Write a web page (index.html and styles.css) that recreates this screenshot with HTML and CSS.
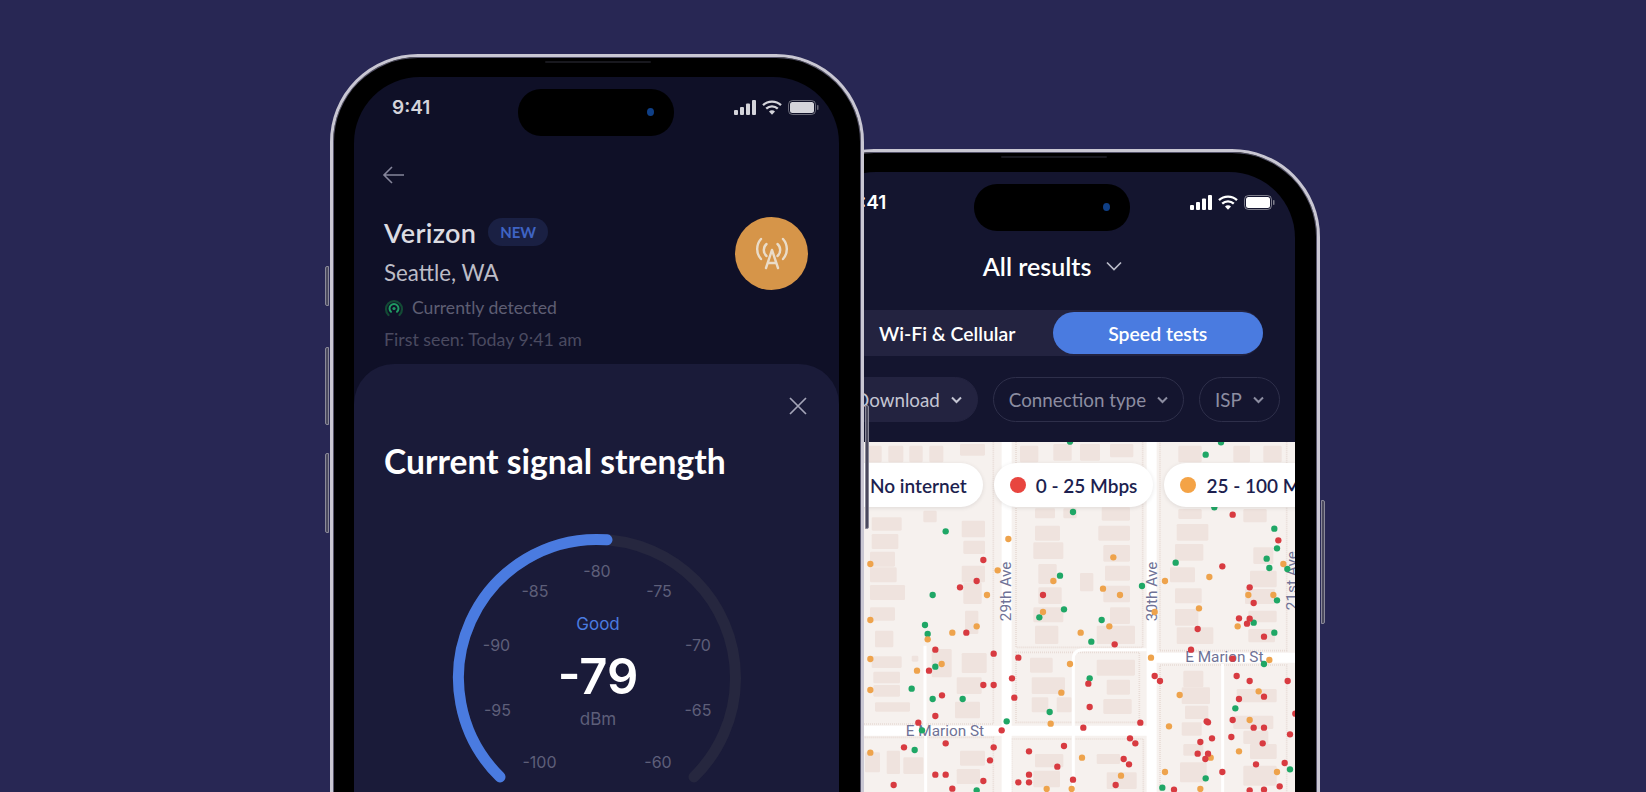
FILE: index.html
```html
<!DOCTYPE html>
<html lang="en">
<head>
    <meta charset="UTF-8">
    <meta name="viewport" content="width=device-width, initial-scale=1.0">
    <title>Signal strength and speed test map</title>
    <link rel="stylesheet" href="styles.css">
</head>
<body>
    <div class="stage">
        <!-- signal strength phone, sits on top -->
        <div class="phone phone-front">
            <span class="side-btn mute"></span>
            <span class="side-btn vol-up"></span>
            <span class="side-btn vol-down"></span>
            <span class="side-btn power"></span>
            <span class="speaker"></span>
            <div class="screen screen-dim">
                <div class="island"><span class="lens"></span></div>
                <div class="status">
                    <span class="time">9:41</span>
                    <div class="status-icons">
                        <svg width="22" height="15" viewBox="0 0 22 15"><g fill="currentColor"><rect x="0" y="10" width="4" height="5" rx="1"/><rect x="6" y="7" width="4" height="8" rx="1"/><rect x="12" y="3.500" width="4" height="11.500" rx="1"/><rect x="18" y="0" width="4" height="15" rx="1"/></g></svg>
                        <svg width="20" height="15" viewBox="0 0 20 15"><g fill="none" stroke="currentColor" stroke-width="2.300"><path d="M1 5.200a13 13 0 0 1 18 0"/><path d="M4.200 8.600a8.500 8.500 0 0 1 11.600 0"/></g><path d="M7 11.400a4.200 4.200 0 0 1 6 0L10 14.800z" fill="currentColor"/></svg>
                        <svg width="31" height="15" viewBox="0 0 31 15"><rect x="0.500" y="0.500" width="27" height="14" rx="4" fill="none" stroke="currentColor" stroke-opacity="0.450"/><rect x="2" y="2" width="24" height="11" rx="2.500" fill="currentColor"/><rect x="29" y="5" width="1.500" height="5" rx="0.750" fill="currentColor" fill-opacity="0.450"/></svg>
                    </div>
                </div>
                <div class="details">
                    <svg class="back" width="24" height="24" viewBox="0 0 24 24" fill="none" stroke="#85859a" stroke-width="1.600"><path d="M23 12H3M11 4l-8 8 8 8"/></svg>
                    <div class="carrier">
                        <div class="carrier-info">
                            <div class="carrier-name">
                                <span class="name">Verizon</span>
                                <span class="badge">NEW</span>
                            </div>
                            <div class="city">Seattle, WA</div>
                            <div class="detected">
                                <svg width="20" height="20" viewBox="0 0 20 20" fill="none" stroke-linecap="round"><path d="M4.500 17a8 8 0 1 1 11 0" stroke="#134a35" stroke-width="2.200"/><path d="M7 13.800a4.500 4.500 0 1 1 6 0" stroke="#1f9a62" stroke-width="2"/><circle cx="10" cy="10.500" r="1.600" fill="#1f9a62"/></svg>
                                <span>Currently detected</span>
                            </div>
                            <div class="first-seen">First seen: Today 9:41 am</div>
                        </div>
                        <div class="tower">
                            <svg width="38" height="38" viewBox="0 0 38 38" fill="none" stroke="#eadcc8" stroke-width="2.400" stroke-linecap="round"><path d="M19 15L13 33M19 15l6 18M15 28h8"/><path d="M13.500 9a8 8 0 0 0 0 12M24.500 9a8 8 0 0 1 0 12"/><path d="M8 4a15 15 0 0 0 0 20M30 4a15 15 0 0 1 0 20"/></svg>
                        </div>
                    </div>
                </div>
                <div class="sheet">
                    <div class="sheet-top">
                        <svg width="18" height="18" viewBox="0 0 18 18" stroke="#a4a5b8" stroke-width="1.700"><path d="M1 1l16 16M17 1L1 17"/></svg>
                    </div>
                    <h1 class="sheet-title">Current signal strength</h1>
                    <svg class="gauge" width="320" height="260" viewBox="0 0 320 260" fill="none">
                        <path d="M63 248.900A138.500 138.500 0 1 1 257 248.900" stroke="#26273f" stroke-width="11" stroke-linecap="round"/>
                        <path d="M63 248.900A138.500 138.500 0 0 1 170 11.860" stroke="#4a7be0" stroke-width="11" stroke-linecap="round"/>
                        <text class="tick" x="160" y="43">-80</text>
                        <text class="tick" x="98" y="63">-85</text>
                        <text class="tick" x="222" y="63">-75</text>
                        <text class="tick" x="59.500" y="116.500">-90</text>
                        <text class="tick" x="261" y="116.500">-70</text>
                        <text class="tick" x="60.500" y="181.600">-95</text>
                        <text class="tick" x="261" y="181.600">-65</text>
                        <text class="tick" x="102.500" y="234">-100</text>
                        <text class="tick" x="221" y="234">-60</text>
                        <text class="quality" x="161" y="96">Good</text>
                        <text class="reading" x="161" y="148">-79</text>
                        <text class="unit" x="161" y="191">dBm</text>
                    </svg>
                </div>
            </div>
        </div>

        <!-- speed test map phone -->
        <div class="phone phone-back">
            <span class="side-btn power"></span>
            <span class="speaker"></span>
            <div class="screen">
                <div class="island"><span class="lens"></span></div>
                <div class="status status-bright">
                    <span class="time">9:41</span>
                    <div class="status-icons">
                        <svg width="22" height="15" viewBox="0 0 22 15"><g fill="currentColor"><rect x="0" y="10" width="4" height="5" rx="1"/><rect x="6" y="7" width="4" height="8" rx="1"/><rect x="12" y="3.500" width="4" height="11.500" rx="1"/><rect x="18" y="0" width="4" height="15" rx="1"/></g></svg>
                        <svg width="20" height="15" viewBox="0 0 20 15"><g fill="none" stroke="currentColor" stroke-width="2.300"><path d="M1 5.200a13 13 0 0 1 18 0"/><path d="M4.200 8.600a8.500 8.500 0 0 1 11.600 0"/></g><path d="M7 11.400a4.200 4.200 0 0 1 6 0L10 14.800z" fill="currentColor"/></svg>
                        <svg width="31" height="15" viewBox="0 0 31 15"><rect x="0.500" y="0.500" width="27" height="14" rx="4" fill="none" stroke="currentColor" stroke-opacity="0.450"/><rect x="2" y="2" width="24" height="11" rx="2.500" fill="currentColor"/><rect x="29" y="5" width="1.500" height="5" rx="0.750" fill="currentColor" fill-opacity="0.450"/></svg>
                    </div>
                </div>
                <div class="results-title">
                    <span>All results</span>
                    <svg width="16" height="10" viewBox="0 0 16 10" fill="none" stroke="#b9bac8" stroke-width="1.700"><path d="M1 1.500l7 7 7-7"/></svg>
                </div>
                <div class="segment">
                    <div class="seg-item">Wi-Fi &amp; Cellular</div>
                    <div class="seg-item seg-active">Speed tests</div>
                </div>
                <div class="filters">
                    <div class="filter filter-on">Download <svg width="11" height="8" viewBox="0 0 11 8" fill="none" stroke="currentColor" stroke-width="2"><path d="M1 1.500l4.500 4.500 4.500-4.500"/></svg></div>
                    <div class="filter">Connection type <svg width="11" height="8" viewBox="0 0 11 8" fill="none" stroke="currentColor" stroke-width="2"><path d="M1 1.500l4.500 4.500 4.500-4.500"/></svg></div>
                    <div class="filter">ISP <svg width="11" height="8" viewBox="0 0 11 8" fill="none" stroke="currentColor" stroke-width="2"><path d="M1 1.500l4.500 4.500 4.500-4.500"/></svg></div>
                </div>
                <div class="map">
                    <svg class="map-art" width="486" height="352" viewBox="-150 39 1458 1056">
                        <g class="blocks">
                            <rect x="-160" y="30" width="560" height="855"/>
                            <rect x="468" y="30" width="380" height="625"/>
                            <rect x="468" y="670" width="370" height="210"/>
                            <rect x="900" y="30" width="380" height="635"/>
                            <rect x="900" y="708" width="380" height="400"/>
                            <rect x="455" y="930" width="395" height="170"/>
                            <rect x="-160" y="925" width="560" height="170"/>
                        </g>
                        <g class="bldg">
                            <rect x="300" y="45" width="75" height="35"/><rect x="25" y="50" width="40" height="50"/><rect x="85" y="50" width="45" height="50"/><rect x="148" y="50" width="40" height="50"/><rect x="208" y="50" width="42" height="50"/>
                            <rect x="35" y="265" width="90" height="40"/><rect x="35" y="315" width="80" height="45"/><rect x="190" y="245" width="40" height="35"/><rect x="305" y="275" width="70" height="50"/><rect x="310" y="335" width="65" height="40"/>
                            <rect x="30" y="368" width="75" height="45"/><rect x="30" y="415" width="80" height="45"/><rect x="30" y="468" width="105" height="45"/><rect x="305" y="410" width="70" height="50"/><rect x="310" y="460" width="55" height="65"/>
                            <rect x="30" y="535" width="75" height="40"/><rect x="45" y="605" width="55" height="50"/><rect x="315" y="545" width="40" height="70"/>
                            <rect x="35" y="682" width="90" height="35"/><rect x="155" y="680" width="20" height="18"/><rect x="215" y="660" width="60" height="85"/><rect x="305" y="672" width="75" height="60"/>
                            <rect x="40" y="728" width="80" height="35"/><rect x="40" y="768" width="80" height="35"/><rect x="290" y="745" width="75" height="50"/><rect x="45" y="820" width="105" height="28"/><rect x="285" y="818" width="75" height="50"/>
                            <rect x="480" y="50" width="55" height="50"/><rect x="580" y="45" width="55" height="50"/><rect x="660" y="45" width="60" height="50"/><rect x="750" y="45" width="70" height="40"/>
                            <rect x="525" y="238" width="60" height="30"/><rect x="610" y="238" width="40" height="30"/><rect x="725" y="235" width="85" height="40"/>
                            <rect x="525" y="290" width="75" height="45"/><rect x="520" y="340" width="90" height="50"/><rect x="730" y="348" width="80" height="50"/><rect x="715" y="290" width="95" height="45"/><rect x="535" y="405" width="55" height="60"/>
                            <rect x="735" y="410" width="75" height="45"/><rect x="660" y="432" width="40" height="55"/><rect x="535" y="475" width="70" height="50"/><rect x="730" y="470" width="80" height="50"/><rect x="520" y="535" width="90" height="45"/><rect x="750" y="535" width="60" height="50"/>
                            <rect x="525" y="590" width="70" height="55"/><rect x="710" y="590" width="115" height="55"/>
                            <rect x="510" y="686" width="68" height="45"/><rect x="515" y="745" width="100" height="50"/><rect x="515" y="805" width="50" height="45"/><rect x="590" y="805" width="45" height="45"/>
                            <rect x="710" y="692" width="115" height="48"/><rect x="740" y="752" width="70" height="45"/><rect x="730" y="810" width="85" height="45"/>
                            <rect x="955" y="50" width="70" height="50"/><rect x="1120" y="50" width="50" height="50"/><rect x="1210" y="50" width="55" height="50"/><rect x="955" y="240" width="70" height="30"/><rect x="1150" y="240" width="70" height="40"/>
                            <rect x="950" y="285" width="95" height="50"/><rect x="945" y="345" width="85" height="50"/><rect x="1180" y="355" width="60" height="50"/><rect x="930" y="415" width="75" height="45"/><rect x="1170" y="425" width="80" height="50"/>
                            <rect x="945" y="478" width="80" height="45"/><rect x="1155" y="480" width="90" height="45"/><rect x="945" y="540" width="70" height="50"/><rect x="1165" y="545" width="85" height="35"/><rect x="950" y="595" width="110" height="50"/><rect x="1165" y="600" width="80" height="40"/>
                            <rect x="970" y="725" width="60" height="50"/><rect x="965" y="775" width="85" height="50"/><rect x="975" y="830" width="70" height="40"/><rect x="965" y="880" width="60" height="40"/>
                            <rect x="1120" y="860" width="120" height="40"/><rect x="1150" y="905" width="75" height="40"/><rect x="1170" y="945" width="80" height="45"/><rect x="1130" y="780" width="120" height="40"/>
                            <rect x="525" y="975" width="85" height="40"/><rect x="520" y="1025" width="80" height="50"/><rect x="710" y="975" width="70" height="30"/><rect x="740" y="1030" width="90" height="50"/>
                            <rect x="15" y="970" width="45" height="60"/><rect x="80" y="965" width="40" height="70"/><rect x="130" y="985" width="60" height="50"/><rect x="300" y="965" width="75" height="45"/><rect x="290" y="1020" width="70" height="45"/>
                            <rect x="970" y="945" width="60" height="35"/><rect x="960" y="1000" width="80" height="60"/><rect x="1150" y="1010" width="100" height="60"/>
                        </g>
                        <g class="roads">
                            <path d="M440 30V1100M875 30V1100"/>
                            <path d="M-160 905H875M875 686H1320"/>
                        </g>
                        <g class="lanes">
                            <path d="M195 650V890M197 905V1100M1088 705V1100"/>
                            <path d="M640 1100V690Q640 662 670 662H860"/>
                        </g>
                        <text class="street" transform="rotate(-90 437 487)" x="437" y="487">29th Ave</text>
                        <text class="street" transform="rotate(-90 877 487)" x="877" y="487">30th Ave</text>
                        <text class="street" transform="rotate(-90 1297 455)" x="1297" y="455">21st Ave</text>
                        <text class="street" x="255" y="905">E Marion St</text>
                        <text class="street" x="1093" y="685">E Marion St</text>
                        <g class="dot-green">
                            <circle cx="1037" cy="77" r="9.500"/><circle cx="1083" cy="40" r="9.500"/><circle cx="630" cy="38" r="9.500"/><circle cx="639" cy="249" r="9.500"/><circle cx="1063" cy="235" r="9.500"/><circle cx="257" cy="307" r="9.500"/><circle cx="1243" cy="299" r="9.500"/><circle cx="1251" cy="358" r="9.500"/><circle cx="1220" cy="389" r="9.500"/><circle cx="1228" cy="417" r="9.500"/><circle cx="1282" cy="420" r="9.500"/><circle cx="947" cy="401" r="9.500"/><circle cx="600" cy="440" r="9.500"/><circle cx="846" cy="471" r="9.500"/><circle cx="218" cy="498" r="9.500"/><circle cx="1251" cy="514" r="9.500"/><circle cx="612" cy="541" r="9.500"/><circle cx="538" cy="565" r="9.500"/><circle cx="725" cy="573" r="9.500"/><circle cx="195" cy="588" r="9.500"/><circle cx="203" cy="615" r="9.500"/><circle cx="1181" cy="581" r="9.500"/><circle cx="1243" cy="611" r="9.500"/><circle cx="694" cy="638" r="9.500"/><circle cx="226" cy="713" r="9.500"/><circle cx="1212" cy="705" r="9.500"/><circle cx="689" cy="748" r="9.500"/><circle cx="155" cy="779" r="9.500"/><circle cx="218" cy="810" r="9.500"/><circle cx="308" cy="810" r="9.500"/><circle cx="1126" cy="838" r="9.500"/><circle cx="569" cy="849" r="9.500"/><circle cx="440" cy="877" r="9.500"/><circle cx="186" cy="904" r="9.500"/><circle cx="164" cy="963" r="9.500"/><circle cx="1037" cy="1048" r="9.500"/><circle cx="1290" cy="1021" r="9.500"/><circle cx="907" cy="1076" r="9.500"/><circle cx="350" cy="1084" r="9.500"/>
                        </g>
                        <g class="dot-orange">
                            <circle cx="445" cy="330" r="9.500"/><circle cx="760" cy="385" r="9.500"/><circle cx="31" cy="405" r="9.500"/><circle cx="1270" cy="405" r="9.500"/><circle cx="413" cy="424" r="9.500"/><circle cx="1048" cy="444" r="9.500"/><circle cx="580" cy="456" r="9.500"/><circle cx="915" cy="456" r="9.500"/><circle cx="381" cy="498" r="9.500"/><circle cx="729" cy="479" r="9.500"/><circle cx="780" cy="498" r="9.500"/><circle cx="1165" cy="498" r="9.500"/><circle cx="1240" cy="498" r="9.500"/><circle cx="1017" cy="538" r="9.500"/><circle cx="549" cy="549" r="9.500"/><circle cx="884" cy="549" r="9.500"/><circle cx="31" cy="573" r="9.500"/><circle cx="350" cy="592" r="9.500"/><circle cx="748" cy="592" r="9.500"/><circle cx="277" cy="611" r="9.500"/><circle cx="662" cy="611" r="9.500"/><circle cx="1133" cy="592" r="9.500"/><circle cx="203" cy="631" r="9.500"/><circle cx="31" cy="690" r="9.500"/><circle cx="245" cy="705" r="9.500"/><circle cx="630" cy="705" r="9.500"/><circle cx="873" cy="686" r="9.500"/><circle cx="1228" cy="693" r="9.500"/><circle cx="171" cy="725" r="9.500"/><circle cx="31" cy="783" r="9.500"/><circle cx="604" cy="791" r="9.500"/><circle cx="1196" cy="787" r="9.500"/><circle cx="959" cy="798" r="9.500"/><circle cx="1169" cy="873" r="9.500"/><circle cx="572" cy="884" r="9.500"/><circle cx="927" cy="892" r="9.500"/><circle cx="31" cy="971" r="9.500"/><circle cx="1137" cy="967" r="9.500"/><circle cx="1052" cy="986" r="9.500"/><circle cx="666" cy="986" r="9.500"/><circle cx="915" cy="1029" r="9.500"/><circle cx="1251" cy="1029" r="9.500"/><circle cx="783" cy="1040" r="9.500"/><circle cx="560" cy="1080" r="9.500"/><circle cx="635" cy="1080" r="9.500"/><circle cx="1021" cy="1080" r="9.500"/>
                        </g>
                        <g class="dot-red">
                            <circle cx="1118" cy="257" r="9.500"/><circle cx="1255" cy="334" r="9.500"/><circle cx="370" cy="393" r="9.500"/><circle cx="1087" cy="412" r="9.500"/><circle cx="350" cy="456" r="9.500"/><circle cx="300" cy="475" r="9.500"/><circle cx="1169" cy="475" r="9.500"/><circle cx="549" cy="498" r="9.500"/><circle cx="1181" cy="522" r="9.500"/><circle cx="1137" cy="568" r="9.500"/><circle cx="1169" cy="569" r="9.500"/><circle cx="1161" cy="584" r="9.500"/><circle cx="319" cy="611" r="9.500"/><circle cx="1013" cy="600" r="9.500"/><circle cx="1212" cy="623" r="9.500"/><circle cx="764" cy="646" r="9.500"/><circle cx="226" cy="662" r="9.500"/><circle cx="993" cy="662" r="9.500"/><circle cx="401" cy="674" r="9.500"/><circle cx="475" cy="686" r="9.500"/><circle cx="1118" cy="689" r="9.500"/><circle cx="207" cy="725" r="9.500"/><circle cx="685" cy="764" r="9.500"/><circle cx="884" cy="741" r="9.500"/><circle cx="900" cy="756" r="9.500"/><circle cx="1130" cy="741" r="9.500"/><circle cx="1169" cy="756" r="9.500"/><circle cx="1283" cy="756" r="9.500"/><circle cx="456" cy="748" r="9.500"/><circle cx="370" cy="768" r="9.500"/><circle cx="401" cy="768" r="9.500"/><circle cx="246" cy="799" r="9.500"/><circle cx="463" cy="806" r="9.500"/><circle cx="1212" cy="803" r="9.500"/><circle cx="1137" cy="810" r="9.500"/><circle cx="689" cy="834" r="9.500"/><circle cx="226" cy="861" r="9.500"/><circle cx="1306" cy="854" r="9.500"/><circle cx="1118" cy="873" r="9.500"/><circle cx="1040" cy="877" r="9.500"/><circle cx="1044" cy="880" r="9.500"/><circle cx="175" cy="881" r="9.500"/><circle cx="841" cy="881" r="9.500"/><circle cx="670" cy="896" r="9.500"/><circle cx="425" cy="904" r="9.500"/><circle cx="1181" cy="896" r="9.500"/><circle cx="1212" cy="896" r="9.500"/><circle cx="1290" cy="916" r="9.500"/><circle cx="810" cy="928" r="9.500"/><circle cx="826" cy="943" r="9.500"/><circle cx="1021" cy="939" r="9.500"/><circle cx="1056" cy="928" r="9.500"/><circle cx="1114" cy="924" r="9.500"/><circle cx="1208" cy="943" r="9.500"/><circle cx="257" cy="943" r="9.500"/><circle cx="132" cy="955" r="9.500"/><circle cx="401" cy="955" r="9.500"/><circle cx="612" cy="951" r="9.500"/><circle cx="507" cy="967" r="9.500"/><circle cx="1013" cy="974" r="9.500"/><circle cx="1044" cy="974" r="9.500"/><circle cx="1036" cy="990" r="9.500"/><circle cx="390" cy="994" r="9.500"/><circle cx="791" cy="990" r="9.500"/><circle cx="807" cy="1006" r="9.500"/><circle cx="1188" cy="1006" r="9.500"/><circle cx="1274" cy="1002" r="9.500"/><circle cx="592" cy="1013" r="9.500"/><circle cx="226" cy="1037" r="9.500"/><circle cx="257" cy="1037" r="9.500"/><circle cx="507" cy="1037" r="9.500"/><circle cx="1087" cy="1029" r="9.500"/><circle cx="370" cy="1056" r="9.500"/><circle cx="475" cy="1060" r="9.500"/><circle cx="507" cy="1060" r="9.500"/><circle cx="639" cy="1052" r="9.500"/><circle cx="101" cy="1068" r="9.500"/><circle cx="767" cy="1068" r="9.500"/><circle cx="1259" cy="1072" r="9.500"/><circle cx="277" cy="1079" r="9.500"/><circle cx="942" cy="1082" r="9.500"/><circle cx="1169" cy="1084" r="9.500"/><circle cx="1212" cy="1082" r="9.500"/>
                        </g>
                    </svg>
                    <div class="legend">
                        <div class="legend-pill"><span class="legend-dot green"></span>No internet</div>
                        <div class="legend-pill"><span class="legend-dot red"></span>0 - 25 Mbps</div>
                        <div class="legend-pill"><span class="legend-dot orange"></span>25 - 100 Mbps</div>
                    </div>
                </div>
            </div>
        </div>
    </div>
</body>
</html>
```

FILE: styles.css
```css
* {
    box-sizing: border-box;
}

html, body {
    margin: 0;
    height: 100%;
    overflow: hidden;
}

body {
    font-family: "Lato", "Open Sans", sans-serif;
    background-color: #282754;
    color: white;
}

.stage {
    display: flex;
    align-items: flex-start;
    padding-left: 330px;
    height: 792px;
    overflow: hidden;
}

/* phone body */
.phone {
    position: relative;
    flex-shrink: 0;
    width: 534px;
    height: 1060px;
    padding: 20px 22px 20px 21px;
    background-color: #000;
    border: 3px solid #c9c7d3;
    border-radius: 88px;
    box-shadow: inset 0 0 0 1px #55536a;
}

.phone-front {
    margin-top: 54px;
    z-index: 2;
}

.phone-back {
    margin-top: 149px;
    margin-left: -78px;
}

.speaker {
    position: absolute;
    top: 4px;
    left: 212px;
    width: 106px;
    height: 2px;
    background-color: #18181e;
    border-radius: 2px;
}

.side-btn {
    position: absolute;
    width: 4px;
    background-color: #4b4a5e;
    border: 1px solid #8a8999;
}

.mute { left: -8px; top: 209px; height: 40px; border-radius: 2px 0 0 2px; }
.vol-up { left: -8px; top: 290px; height: 78px; border-radius: 2px 0 0 2px; }
.vol-down { left: -8px; top: 396px; height: 80px; border-radius: 2px 0 0 2px; }
.power { right: -8px; top: 348px; height: 124px; border-radius: 0 2px 2px 0; }

.screen {
    position: relative;
    height: 100%;
    border-radius: 66px;
    overflow: hidden;
    background-color: #14152f;
}

.screen-dim {
    background-color: #0f1027;
}

.island {
    position: absolute;
    top: 12px;
    left: 50%;
    width: 156px;
    height: 47px;
    margin-left: -79px;
    background-color: #000;
    border-radius: 23px;
}

.lens {
    position: absolute;
    top: 19px;
    right: 20px;
    width: 7px;
    height: 8px;
    border-radius: 50%;
    background-color: #0f3f86;
}

.status {
    display: flex;
    justify-content: space-between;
    align-items: center;
    height: 60px;
    padding: 0 20px 0 38px;
    color: #d4d4da;
}

.status-bright {
    color: white;
}

.time {
    font-family: "Inter", sans-serif;
    font-size: 19px;
    font-weight: 600;
}

.status-icons {
    display: flex;
    align-items: center;
    gap: 6px;
}

/* signal phone */
.details {
    padding: 26px 31px 0 30px;
}

.back {
    display: block;
    margin-left: -3px;
}

.carrier {
    display: flex;
    justify-content: space-between;
    align-items: flex-start;
    margin-top: 30px;
}

.carrier-name {
    display: flex;
    align-items: center;
    gap: 12px;
    height: 30px;
}

.name {
    font-size: 27px;
    font-weight: 600;
    letter-spacing: 0.3px;
    color: #dcdce2;
}

.badge {
    padding: 0 12px;
    height: 28px;
    line-height: 28px;
    border-radius: 14px;
    font-size: 15px;
    font-weight: 700;
    color: #3f64c4;
    background-color: #1a2043;
}

.city {
    margin-top: 12px;
    font-size: 22.300px;
    line-height: 28px;
    color: #bcbcc6;
}

.detected {
    display: flex;
    align-items: center;
    gap: 8px;
    margin-top: 10px;
    font-size: 17.600px;
    line-height: 22px;
    color: #5e5e73;
}

.first-seen {
    margin-top: 9px;
    font-size: 17.800px;
    line-height: 22px;
    color: #4a4a60;
}

.tower {
    display: flex;
    align-items: center;
    justify-content: center;
    width: 73px;
    height: 73px;
    border-radius: 50%;
    background-color: #d69549;
}

.sheet {
    margin-top: 14px;
    padding: 33px 30px 0;
    height: 700px;
    border-radius: 40px 40px 0 0;
    background-color: #1a1b39;
}

.sheet-top {
    display: flex;
    justify-content: flex-end;
    padding-right: 2px;
    height: 18px;
}

.sheet-title {
    margin: 26px 0 0;
    font-size: 33.600px;
    font-weight: 700;
    line-height: 40px;
    color: white;
}

.gauge {
    display: block;
    margin: 47px auto 0;
}

.gauge text {
    text-anchor: middle;
    dominant-baseline: central;
    font-family: "Inter", sans-serif;
}

.tick {
    font-size: 16px;
    fill: #5e5f79;
}

.quality {
    font-size: 17px;
    fill: #4a7be0;
}

.reading {
    font-size: 49px;
    font-weight: 600;
    fill: white;
}

.unit {
    font-size: 17px;
    fill: #5e5f79;
}

/* map phone */
.results-title {
    display: flex;
    justify-content: center;
    align-items: center;
    gap: 15px;
    height: 32px;
    margin-top: 18px;
    font-size: 25px;
    font-weight: 600;
}

.segment {
    display: flex;
    margin: 28px 32px 0;
    height: 46px;
    padding: 2px 0;
    border-radius: 23px;
    background-color: #232340;
}

.seg-item {
    flex: 1;
    display: flex;
    align-items: center;
    justify-content: center;
    border-radius: 21px;
    font-size: 19.400px;
    font-weight: 600;
}

.seg-active {
    background-color: #4a7be0;
}

.filters {
    display: flex;
    gap: 15px;
    margin-top: 21px;
    padding-left: 29px;
    height: 45px;
}

.filter {
    display: flex;
    align-items: center;
    gap: 11px;
    flex-shrink: 0;
    padding: 0 15px;
    border: 1px solid #2e2f4a;
    border-radius: 23px;
    font-size: 18.800px;
    color: #8c8da1;
}

.filter-on {
    border-color: #232340;
    background-color: #232340;
    color: #c4c5d2;
}

.map {
    position: relative;
    margin-top: 20px;
    height: 360px;
    overflow: hidden;
    background-color: #f6f1ee;
}

.map-art {
    display: block;
}

.blocks rect {
    fill: none;
    stroke: #e8dcd6;
    stroke-width: 5;
    stroke-dasharray: 3 3;
}

.bldg rect {
    fill: #efe3de;
    rx: 4px;
}

.roads path {
    fill: none;
    stroke: white;
    stroke-width: 30;
}

.lanes path {
    fill: none;
    stroke: white;
    stroke-width: 9;
}

.street {
    font-family: "Roboto", sans-serif;
    font-size: 46px;
    text-anchor: middle;
    dominant-baseline: central;
    fill: #6f7296;
}

.dot-green { fill: #1fa766; }
.dot-orange { fill: #eea34c; }
.dot-red { fill: #d83b41; }

.legend {
    position: absolute;
    top: 21px;
    left: 18px;
    display: flex;
    gap: 11px;
}

.legend-pill {
    display: flex;
    align-items: center;
    gap: 10px;
    flex-shrink: 0;
    height: 44px;
    padding: 0 16px;
    border-radius: 22px;
    background-color: white;
    box-shadow: 0 1px 4px rgba(60, 50, 50, 0.12);
    font-size: 19px;
    font-weight: 600;
    color: #1d1f4f;
}

.legend-dot {
    width: 16px;
    height: 16px;
    border-radius: 50%;
}

.green { background-color: #1fa766; }
.red { background-color: #e8453f; }
.orange { background-color: #f4a346; }
```
